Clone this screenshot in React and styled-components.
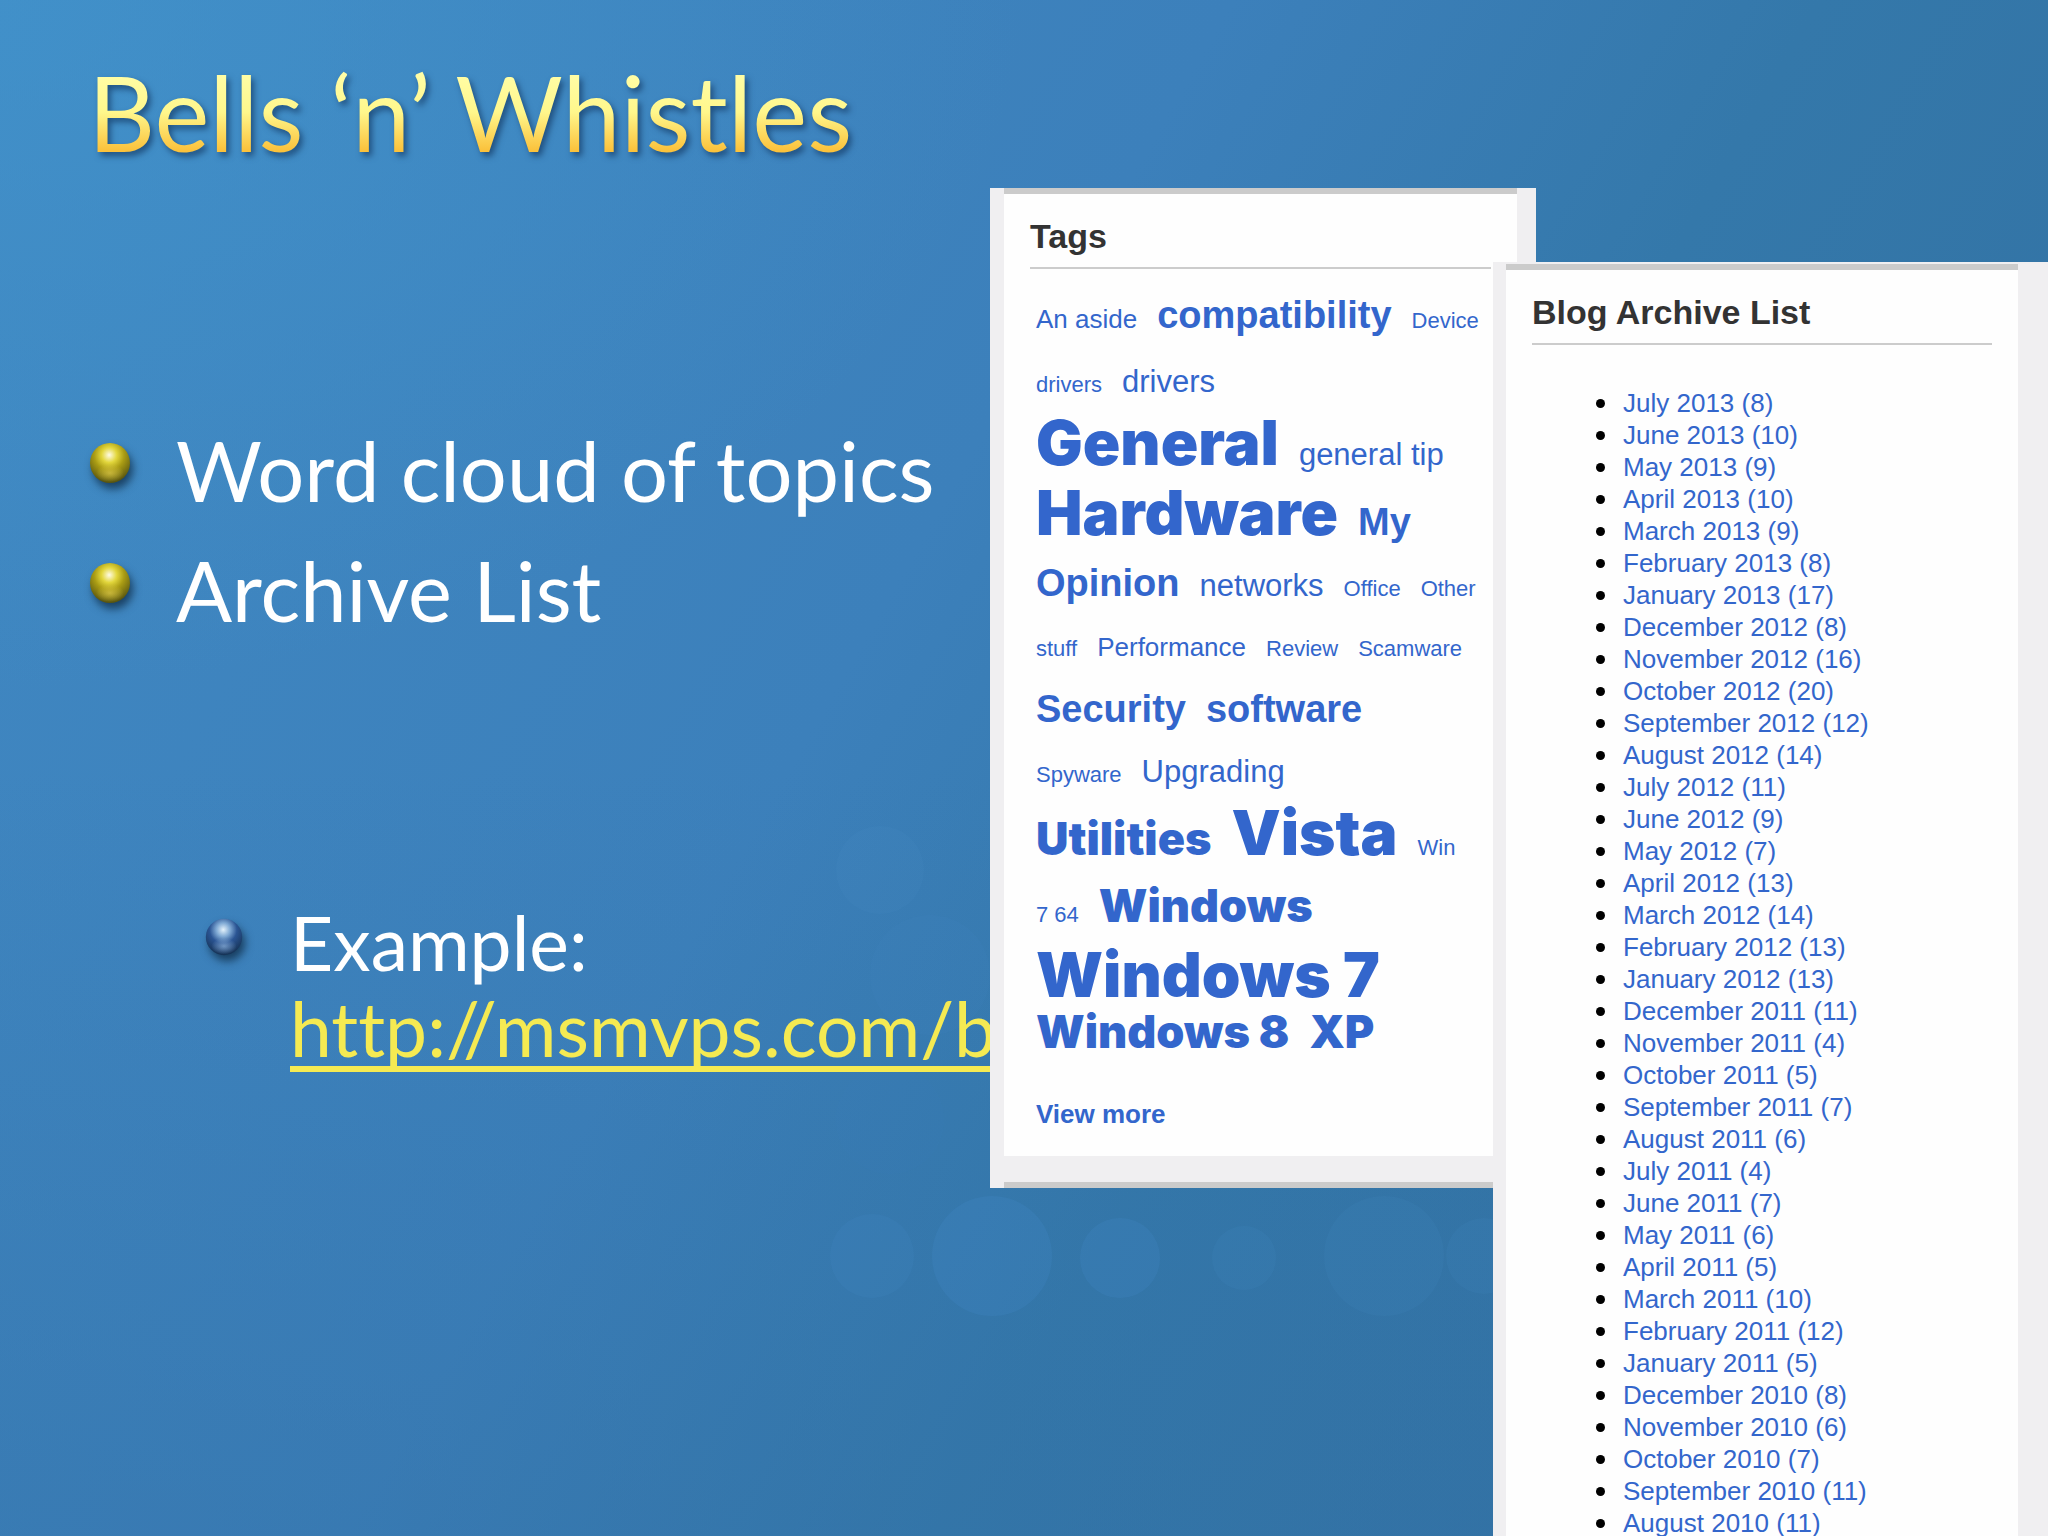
import React from "react";
import styled, { createGlobalStyle } from "styled-components";

const GlobalStyle = createGlobalStyle`
  * {
    box-sizing: border-box;
  }
  body {
    margin: 0;
    background: #3a7eb8;
  }
  h1, h2, p, ul {
    margin: 0;
    padding: 0;
  }
  ul {
    list-style: none;
  }
`;

// each row of the cloud: gap above it and the tags it holds
const tagRows = [
  { gap: 40, tags: [["An aside", "small"], ["compatibility", "bold"], ["Device", "tiny"]] },
  { gap: 40, tags: [["drivers", "tiny"], ["drivers", "medium"]] },
  { gap: 46, tags: [["General", "huge"], ["general tip", "medium"]] },
  { gap: 46, tags: [["Hardware", "huge"], ["My", "bold"]] },
  { gap: 40, tags: [["Opinion", "bold"], ["networks", "medium"], ["Office", "tiny"], ["Other", "tiny"]] },
  { gap: 36, tags: [["stuff", "tiny"], ["Performance", "small"], ["Review", "tiny"], ["Scamware", "tiny"]] },
  { gap: 42, tags: [["Security", "bold"], ["software", "bold"]] },
  { gap: 36, tags: [["Spyware", "tiny"], ["Upgrading", "medium"]] },
  { gap: 46, tags: [["Utilities", "large"], ["Vista", "huge"], ["Win", "tiny"]] },
  { gap: 46, tags: [["7 64", "tiny"], ["Windows", "large"]] },
  { gap: 48, tags: [["Windows 7", "huge"]] },
  { gap: 30, tags: [["Windows 8", "large"], ["XP", "large"]] },
];

const archive = [
  "July 2013 (8)",
  "June 2013 (10)",
  "May 2013 (9)",
  "April 2013 (10)",
  "March 2013 (9)",
  "February 2013 (8)",
  "January 2013 (17)",
  "December 2012 (8)",
  "November 2012 (16)",
  "October 2012 (20)",
  "September 2012 (12)",
  "August 2012 (14)",
  "July 2012 (11)",
  "June 2012 (9)",
  "May 2012 (7)",
  "April 2012 (13)",
  "March 2012 (14)",
  "February 2012 (13)",
  "January 2012 (13)",
  "December 2011 (11)",
  "November 2011 (4)",
  "October 2011 (5)",
  "September 2011 (7)",
  "August 2011 (6)",
  "July 2011 (4)",
  "June 2011 (7)",
  "May 2011 (6)",
  "April 2011 (5)",
  "March 2011 (10)",
  "February 2011 (12)",
  "January 2011 (5)",
  "December 2010 (8)",
  "November 2010 (6)",
  "October 2010 (7)",
  "September 2010 (11)",
  "August 2010 (11)",
];

const tagStyles = {
  tiny: { size: 22, weight: 400 },
  small: { size: 26, weight: 400 },
  medium: { size: 31, weight: 400 },
  bold: { size: 38, weight: 700 },
  large: { size: 45, weight: 900 },
  huge: { size: 62, weight: 900 },
};

const Backdrop = () => (
  <Bokeh viewBox="0 0 2048 1536" preserveAspectRatio="none" aria-hidden="true">
    <g fill="#4a90d0">
      <circle cx="872" cy="1256" r="42" opacity="0.14" />
      <circle cx="992" cy="1256" r="60" opacity="0.18" />
      <circle cx="1120" cy="1258" r="40" opacity="0.18" />
      <circle cx="1244" cy="1258" r="32" opacity="0.12" />
      <circle cx="1384" cy="1256" r="60" opacity="0.1" />
      <circle cx="1484" cy="1256" r="38" opacity="0.1" />
      <circle cx="880" cy="870" r="44" opacity="0.1" />
      <circle cx="930" cy="975" r="60" opacity="0.08" />
      <circle cx="890" cy="1120" r="54" opacity="0.06" />
    </g>
  </Bokeh>
);

const Ball = ({ tone }) => {
  const id = "ball-" + tone;
  const gold = tone === "gold";
  return (
    <BallIcon $small={!gold} viewBox="0 0 44 44" aria-hidden="true">
      <defs>
        <radialGradient id={id} cx="0.48" cy="0.3" r="0.68">
          <stop offset="0" stopColor={gold ? "#fffbe6" : "#e4f2fb"} />
          <stop offset="0.28" stopColor={gold ? "#e2d63c" : "#7fa9d4"} />
          <stop offset="0.55" stopColor={gold ? "#aa9c14" : "#2b5594"} />
          <stop offset="1" stopColor={gold ? "#5a5610" : "#173458"} />
        </radialGradient>
        <radialGradient id={id + "-glow"} cx="0.5" cy="0.5" r="0.5">
          <stop offset="0" stopColor={gold ? "#dcc84a" : "#8fb4dc"} stopOpacity="0.7" />
          <stop offset="1" stopColor={gold ? "#dcc84a" : "#8fb4dc"} stopOpacity="0" />
        </radialGradient>
      </defs>
      <circle cx="22" cy="22" r="20" fill={`url(#${id})`} />
      <ellipse cx="22" cy="32" rx="14" ry="9" fill={`url(#${id}-glow)`} />
    </BallIcon>
  );
};

const App = () => {
  return (
    <>
      <GlobalStyle />
      <Slide>
        <Backdrop />
        <Content>
          <Title>Bells ‘n’ Whistles</Title>
          <ul>
            <Point>
              <Ball tone="gold" />
              Word cloud of topics
            </Point>
            <Point>
              <Ball tone="gold" />
              Archive List
            </Point>
          </ul>
          <SubPoint>
            <Ball tone="blue" />
            <p>
              Example:
              <br />
              <SlideLink href="http://msmvps.com/b">http://msmvps.com/b</SlideLink>
            </p>
          </SubPoint>
        </Content>

        <TagsPanel>
          <PanelBody>
            <PanelTitle>Tags</PanelTitle>
            <Cloud>
              {tagRows.map((row, i) => (
                <TagRow key={i} $gap={row.gap}>
                  {row.tags.map(([name, kind]) => (
                    <Tag key={name + kind} href="#" $kind={tagStyles[kind]}>
                      {name}
                    </Tag>
                  ))}
                </TagRow>
              ))}
            </Cloud>
            <ViewMore href="#">View more</ViewMore>
          </PanelBody>
          <PanelFoot />
        </TagsPanel>

        <ArchivePanel>
          <PanelBody>
            <PanelTitle>Blog Archive List</PanelTitle>
            <Months>
              {archive.map((month) => (
                <Month key={month}>
                  <a href="#">{month}</a>
                </Month>
              ))}
            </Months>
          </PanelBody>
        </ArchivePanel>
      </Slide>
    </>
  );
};

const Slide = styled.main`
  position: relative;
  display: grid;
  grid-template-columns: minmax(0, 990fr) minmax(0, 503fr) minmax(0, 43fr) minmax(0, 512fr);
  align-items: start;
  height: 100vh;
  overflow: hidden;
  background:
    linear-gradient(rgba(50, 112, 165, 0) 50%, rgba(50, 112, 165, 0.4) 100%),
    radial-gradient(ellipse 50% 45% at 0% 0%, rgba(66, 150, 206, 0.6), rgba(66, 150, 206, 0) 100%),
    linear-gradient(120deg, #4088c2 0%, #3c80bb 42%, #3478aa 62%, #326fa0 100%);
`;

const Bokeh = styled.svg`
  position: absolute;
  inset: 0;
  width: 100%;
  height: 100%;
`;

const Content = styled.section`
  grid-column: 1;
  grid-row: 1;
  position: relative;
  padding: 48px 0 0 88px;
  font-family: Lato, "Liberation Sans", sans-serif;
  font-variant-ligatures: none;
  color: #fff;
  white-space: nowrap;
`;

const Title = styled.h1`
  width: max-content;
  margin-bottom: 234px;
  font-size: 104px;
  font-weight: 400;
  line-height: 128px;
  color: transparent;
  background: linear-gradient(#fffda6 20%, #fff78c 50%, #fbc23c 80%);
  background-clip: text;
  -webkit-background-clip: text;
  filter: drop-shadow(3px 4px 3px rgba(10, 40, 80, 0.6));
`;

const Point = styled.li`
  display: flex;
  align-items: center;
  gap: 44px;
  font-size: 83px;
  line-height: 120px;
`;

const BallIcon = styled.svg`
  flex: none;
  width: ${(props) => (props.$small ? "40px" : "44px")};
  height: ${(props) => (props.$small ? "40px" : "44px")};
  margin-bottom: 14px;
  filter: drop-shadow(3px 6px 4px rgba(10, 35, 60, 0.7));
`;

const SubPoint = styled.div`
  display: flex;
  align-items: flex-start;
  gap: 46px;
  margin: 249px 0 0 116px;
  font-size: 75px;
  line-height: 86px;

  svg {
    margin-top: 18px;
  }
`;

const SlideLink = styled.a`
  color: #f5ea52;
  text-decoration: underline;
  text-decoration-thickness: 6px;
  text-underline-offset: 9px;
  text-decoration-skip-ink: none;
`;

const Panel = styled.aside`
  position: relative;
  grid-row: 1;
  background: #f0eff1;
  font-family: "Liberation Sans", Arial, sans-serif;

  a {
    color: #3366cc;
    text-decoration: none;
  }
`;

const TagsPanel = styled(Panel)`
  grid-column: 2 / 4;
  margin-top: 188px;
  padding: 0 19px 0 14px;
`;

const ArchivePanel = styled(Panel)`
  grid-column: 3 / 5;
  margin-top: 262px;
  padding: 2px 30px 0 13px;
`;

const PanelBody = styled.div`
  padding: 22px 26px 0;
  border-top: 6px solid #cbcbcb;
  background: #fefefe;
`;

const PanelTitle = styled.h2`
  padding-bottom: 11px;
  border-bottom: 2px solid #ccc;
  font-size: 34px;
  font-weight: 700;
  line-height: 40px;
  color: #333;
`;

const Cloud = styled.div`
  padding-left: 6px;
`;

const TagRow = styled.div`
  height: 24px;
  margin-top: ${(props) => props.$gap}px;
  font-size: 22px;
  line-height: 24px;
  white-space: nowrap;
`;

const Tag = styled.a`
  margin-right: 20px;
  font-family: ${(props) => (props.$kind.weight === 900 ? 'Inter, "Liberation Sans", sans-serif' : "inherit")};
  font-size: ${(props) => props.$kind.size}px;
  font-weight: ${(props) => props.$kind.weight};
  line-height: 0;
`;

const ViewMore = styled.a`
  display: block;
  padding: 45px 0 26px 6px;
  font-size: 26px;
  font-weight: 700;
  line-height: 32px;
`;

const PanelFoot = styled.div`
  height: 32px;
  border-bottom: 6px solid #cbcbcb;
`;

const Months = styled.ul`
  padding: 42px 0 24px 64px;
`;

const Month = styled.li`
  display: flex;
  align-items: center;
  gap: 18px;
  font-size: 26px;
  line-height: 32px;
  white-space: nowrap;

  &::before {
    content: "";
    width: 9px;
    height: 9px;
    border-radius: 50%;
    background: #000;
  }
`;

export default App;
